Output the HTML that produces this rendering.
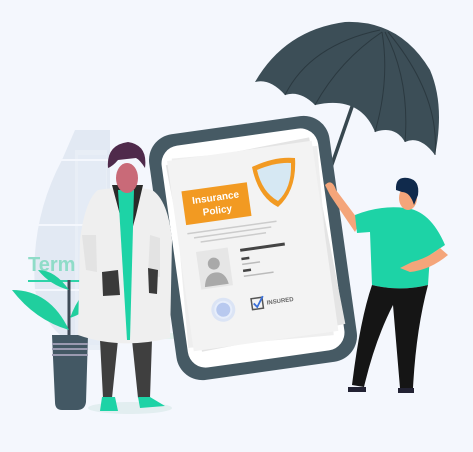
<!DOCTYPE html>
<html><head><style>
html,body{margin:0;padding:0;background:#f4f7fd;}
svg{display:block}
</style></head><body>
<svg width="473" height="452" viewBox="0 0 473 452" xmlns="http://www.w3.org/2000/svg">
<rect width="473" height="452" fill="#f4f7fd"/>
<!-- background building circle -->
<path d="M75 130 L62 160 Q30 220 35 290 Q45 330 75 345 L110 345 L110 130 Z" fill="#e2e9f3"/>
<rect x="75" y="150" width="32" height="200" fill="#e8eef6"/>
<rect x="78" y="155" width="28" height="190" fill="#e4ebf5"/>
<line x1="35" y1="160" x2="110" y2="160" stroke="#f4f7fd" stroke-width="2"/>
<line x1="30" y1="225" x2="110" y2="225" stroke="#f4f7fd" stroke-width="2"/>
<line x1="30" y1="290" x2="110" y2="290" stroke="#f4f7fd" stroke-width="2"/>
<rect x="100" y="280" width="100" height="6" fill="#e4f3ef"/>
<rect x="150" y="308" width="50" height="6" fill="#e4f3ef"/>
<rect x="150" y="333" width="50" height="6" fill="#e4f3ef"/>
<text x="28" y="271" font-family="Liberation Sans, sans-serif" font-weight="bold" font-size="20" fill="#8fdcc8">Term</text>
<line x1="28" y1="281" x2="100" y2="281" stroke="#2fd3a8" stroke-width="2"/>
<!-- plant -->
<line x1="69" y1="280" x2="69" y2="337" stroke="#3f4b57" stroke-width="3"/>
<path d="M69 330 Q50 290 12 290 Q35 320 69 330Z" fill="#20cf9e"/>
<path d="M70 318 Q80 290 100 282 Q95 310 70 318Z" fill="#20cf9e"/>
<path d="M69 290 Q55 270 38 270 Q50 285 69 290Z" fill="#20cf9e"/>
<path d="M52 335 L88 335 L86 402 Q85 410 77 410 L62 410 Q55 410 55 402 Z" fill="#435864"/>
<rect x="52" y="343" width="36" height="2" fill="#9a9ab0"/>
<rect x="52" y="348" width="36" height="2" fill="#9a9ab0"/>
<rect x="52" y="354" width="36" height="2" fill="#9a9ab0"/>
<!-- umbrella shaft -->
<line x1="378" y1="32" x2="330" y2="170" stroke="#37474f" stroke-width="3.5"/>
<!-- umbrella canopy -->
<path d="M255 82 Q285 30 345 22 Q400 20 430 70 Q445 105 435 155 Q420 135 405 142 Q395 125 375 132 Q360 95 315 105 Q300 90 285 95 Q270 78 255 82Z" fill="#3c4e57"/>
<path d="M285 95 Q310 45 380 30 M315 105 Q340 60 382 32 M375 132 Q390 80 382 32 M405 142 Q410 80 385 32 M435 155 Q440 95 388 32" stroke="#2b3940" stroke-width="1" fill="none"/>
<!-- phone frame -->
<g transform="rotate(-8 253 248)">
<rect x="162" y="124" width="182" height="248" rx="26" fill="#465a64"/>
<rect x="174" y="136" width="158" height="224" rx="18" fill="#fff"/>
<rect x="183" y="150" width="146" height="190" fill="#e4e4e4" transform="rotate(-3 256 245)"/>
<rect x="180" y="152" width="146" height="190" fill="#eeeeee" transform="rotate(3 256 245)"/>
<rect x="180" y="150" width="146" height="192" fill="#f3f3f3"/>
<rect x="190" y="182" width="66" height="34" fill="#f29a22"/>
<text x="223" y="196" text-anchor="middle" font-family="Liberation Sans, sans-serif" font-weight="bold" font-size="10" fill="#fff">Insurance</text>
<text x="223" y="209" text-anchor="middle" font-family="Liberation Sans, sans-serif" font-weight="bold" font-size="10" fill="#fff">Policy</text>
<rect x="190" y="224" width="90" height="1.5" fill="#ccc"/>
<rect x="196" y="229" width="78" height="1.5" fill="#ccc"/>
<rect x="202" y="234" width="66" height="1.5" fill="#ccc"/>
<rect x="196" y="244" width="32" height="38" fill="#e6e6e6"/>
<circle cx="212" cy="258" r="6" fill="#a9a9a9"/>
<path d="M200 280 Q202 267 212 267 Q222 267 224 280Z" fill="#a9a9a9"/>
<rect x="240" y="247" width="45" height="3" fill="#444"/>
<rect x="240" y="256" width="8" height="2.5" fill="#444"/>
<rect x="240" y="262" width="18" height="1.5" fill="#bbb"/>
<rect x="240" y="268" width="8" height="2.5" fill="#444"/>
<rect x="240" y="274" width="30" height="1.5" fill="#bbb"/>
<circle cx="215" cy="305" r="12" fill="#dbe4f5"/>
<circle cx="215" cy="305" r="8" fill="#b8c9ef" stroke="#e7eefb" stroke-width="2"/>
<rect x="244" y="298" width="11" height="11" fill="none" stroke="#555" stroke-width="1.5"/>
<path d="M246 303 L249 307 L256 297" stroke="#3a6fd8" stroke-width="1.8" fill="none"/>
<text x="259" y="306" font-family="Liberation Sans, sans-serif" font-weight="bold" font-size="6" fill="#666">INSURED</text>
</g>
<!-- shield -->
<path d="M252 167 Q275 156 295 158 Q297 190 278 207 Q258 197 252 167Z" fill="#f29a22"/>
<path d="M257 170 Q276 162 291 163 Q292 188 278 201 Q262 192 257 170Z" fill="#d6e8f3"/>
<!-- right person -->
<path d="M325 185 Q332 178 336 190 L360 222 L355 232 Q340 210 330 195Z" fill="#f4a57a"/>
<path d="M355 215 Q380 205 405 208 Q430 210 445 245 L430 255 L428 285 Q400 292 372 285 L370 232 L357 233Z" fill="#1dd3a6"/>
<path d="M440 248 L448 255 Q430 270 410 272 L400 268 L412 262 Q428 258 440 248Z" fill="#f4a57a"/>
<path d="M372 285 Q360 320 352 385 L364 387 Q375 340 393 305 L400 388 L413 388 Q416 330 428 285 Q400 292 372 285Z" fill="#151515"/>
<path d="M348 387 L366 387 L366 392 L348 392Z M398 388 L414 388 L414 393 L398 393Z" fill="#223"/>
<ellipse cx="408" cy="198" rx="9" ry="12" fill="#f4a57a"/>
<path d="M396 190 Q395 176 408 178 Q420 180 418 195 L414 205 Q410 192 402 192 Z" fill="#102a4c"/>
<!-- doctor -->
<ellipse cx="130" cy="408" rx="42" ry="6" fill="#e2eef0"/>
<path d="M100 340 L103 398 L112 398 L118 340Z M132 340 L138 398 L150 398 L152 340Z" fill="#3f3f3f"/>
<path d="M102 397 L115 397 L118 411 L100 411Z M138 397 L150 397 L165 406 L140 408Z" fill="#1dd3a6"/>
<path d="M98 190 Q85 200 80 240 L78 335 Q120 350 170 338 L172 240 Q168 200 152 190 Q130 185 98 190Z" fill="#efefef"/>
<path d="M82 235 L86 270 L97 272 L96 235Z M150 235 L148 275 L160 277 L160 238Z" fill="#e3e3e3"/>
<path d="M102 272 L118 270 L120 295 L103 296Z M148 268 L158 270 L157 294 L149 293Z" fill="#3a3a3a"/>
<path d="M112 185 L120 215 L128 245 L136 215 L143 185 Z" fill="#2a2a2a"/>
<path d="M118 190 L134 190 L130 340 L127 340 Z" fill="#1dd3a6"/>
<ellipse cx="127" cy="178" rx="11" ry="15" fill="#c96a78"/>
<path d="M108 168 Q106 145 128 142 Q148 145 145 168 Q140 160 136 158 L118 160 Q113 166 108 168Z" fill="#4f2a4b"/>
</svg>
</body></html>
